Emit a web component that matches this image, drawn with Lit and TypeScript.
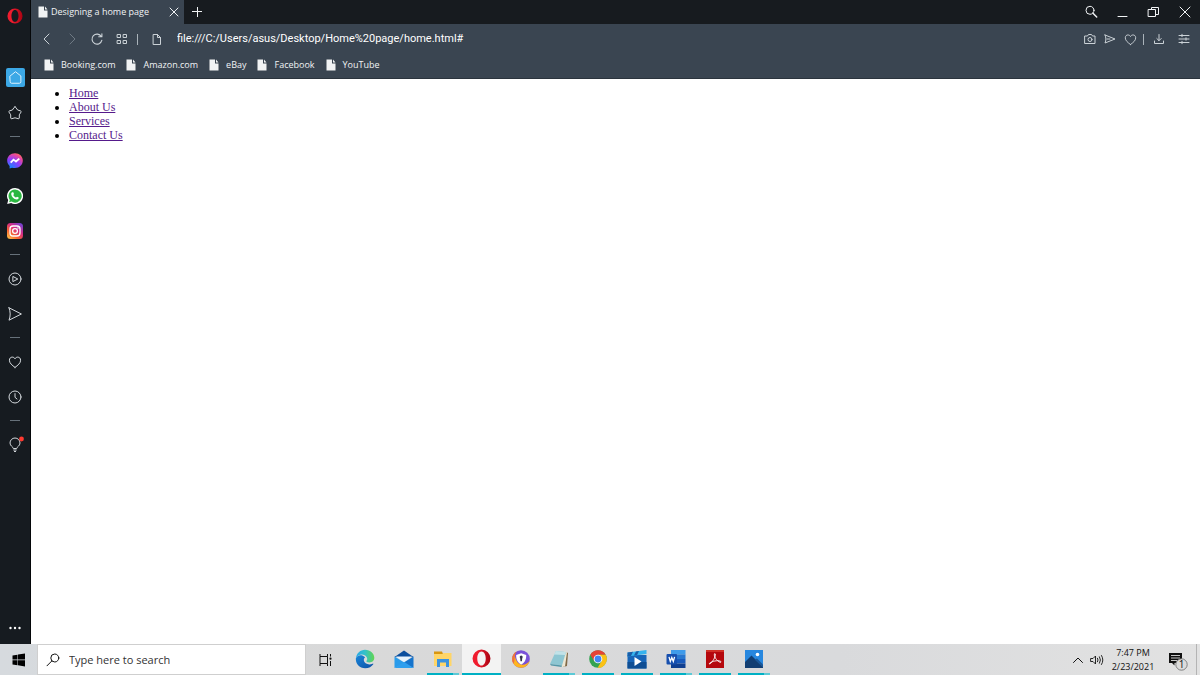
import { LitElement, html, css, svg, nothing, TemplateResult } from "lit";
import { customElement } from "lit/decorators.js";
import { classMap } from "lit/directives/class-map.js";

type Glyph = TemplateResult;

const icon = (size: number, box: string, body: Glyph) => html`<svg
  width=${size} height=${size} viewBox=${box} fill="none" stroke="currentColor"
  stroke-width="1" stroke-linejoin="round" stroke-linecap="round" aria-hidden="true">${body}</svg>`;

const line = (body: Glyph, size = 14) => icon(size, "0 0 14 14", body);

const heart = svg`<path d="M7 12.4C4 10.2 1.4 8.2 1.4 5.2C1.4 3.3 2.7 2.1 4.2 2.1C5.5 2.1 6.5 2.8 7 3.8C7.5 2.8 8.5 2.1 9.8 2.1C11.3 2.1 12.6 3.3 12.6 5.2C12.6 8.2 10 10.2 7 12.4Z"/>`;
const send = svg`<path d="M1 .8L13.4 7L1 13.2C2.6 9 2.6 5 1 .8Z"/>`;

const operaLogo = (size: number, id: string) => html`<svg width=${size} height=${size} viewBox="0 0 18 18" aria-hidden="true">
  <defs><linearGradient id=${id} x1="0" x2="1"><stop offset=".3" stop-color="#f01c2e"/><stop offset="1" stop-color="#a80312"/></linearGradient></defs>
  <path fill=${`url(#${id})`} fill-rule="evenodd" d="M9 .5A8.5 8.5 0 1 1 9 17.5A8.5 8.5 0 0 1 9 .5ZM9 2.3C6.6 2.3 5 5.4 5 9C5 12.6 6.6 15.7 9 15.7C11.4 15.7 13 12.6 13 9C13 5.4 11.4 2.3 9 2.3Z"/></svg>`;

const pageIcon = html`<svg width="10" height="12" viewBox="0 0 10 12" aria-hidden="true">
  <path fill="#f1f3f4" d="M.5 .5H6V4.5H9.5V11.5H.5Z"/><path fill="#f1f3f4" d="M7 .6L9.5 3.5H7Z"/></svg>`;

const messenger = html`<svg width="16" height="16" viewBox="0 0 16 16" aria-hidden="true">
  <defs><radialGradient id="ms" cx=".2" cy="1" r="1.1"><stop offset="0" stop-color="#0a8cff"/><stop offset=".55" stop-color="#8c3cff"/><stop offset=".85" stop-color="#e8489c"/><stop offset="1" stop-color="#ff6c60"/></radialGradient></defs>
  <path fill="url(#ms)" d="M8 .2C3.5 .2 .2 3.4 .2 7.6C.2 9.9 1.1 11.7 2.6 13V15.6L5 14.7C6 15 7 15.1 8 15.1C12.5 15.1 15.8 11.9 15.8 7.6C15.8 3.4 12.5 .2 8 .2Z"/>
  <path d="M3.7 9.6L6.5 6.6L9 8.5L12.3 5.6" fill="none" stroke="#fff" stroke-width="1.8"/></svg>`;

const whatsapp = html`<svg width="16" height="16" viewBox="0 0 16 16" aria-hidden="true">
  <path fill="#fff" d="M8 0A8 8 0 1 1 4.2 15L.2 16L1.2 12.1A8 8 0 0 1 8 0Z"/>
  <path fill="#2bb741" d="M8 1.4A6.6 6.6 0 1 1 4.6 13.6L2.1 14.2L2.8 11.9A6.6 6.6 0 0 1 8 1.4Z"/>
  <path fill="#fff" d="M5.3 4.2L6.3 4.3L7 6L6.3 6.9C6.9 8.2 7.8 9 9.1 9.6L10 8.7L11.7 9.6C11.8 10.9 10.8 11.7 9.7 11.6C6.8 11.2 4.6 9 4.2 6.3C4.1 5.4 4.6 4.5 5.3 4.2Z"/></svg>`;

const instagram = html`<svg width="16" height="16" viewBox="0 0 16 16" aria-hidden="true">
  <defs><linearGradient id="ig" x1=".1" y1="1" x2=".9" y2="0"><stop offset="0" stop-color="#ffc24a"/><stop offset=".3" stop-color="#f7652f"/><stop offset=".6" stop-color="#d62c83"/><stop offset="1" stop-color="#6a44d8"/></linearGradient></defs>
  <rect width="16" height="16" rx="3.5" fill="url(#ig)"/>
  <g fill="none" stroke="#fff" stroke-width="1.3"><rect x="3" y="3" width="10" height="10" rx="3"/><circle cx="8" cy="8" r="2.4"/></g><circle cx="11" cy="5" r=".8" fill="#fff"/></svg>`;

interface SideItem { name: string; art: Glyph; active?: boolean; }
const sideGroups: SideItem[][] = [
  [
    { name: "Speed Dial", active: true, art: line(svg`<path d="M1.2 5.4L7 .8L12.8 5.4V11.6Q12.8 13.2 11.2 13.2H2.8Q1.2 13.2 1.2 11.6Z"/>`, 13) },
    { name: "Bookmarks", art: line(svg`<path d="M7 .9Q7.5 .9 7.8 1.4L9.6 4L12.6 4.9Q13.5 5.3 13 6.1L11.3 8.8L11.3 12Q11.2 12.9 10.3 12.7L7 11.8L3.7 12.7Q2.8 12.9 2.7 12L2.7 8.8L1 6.1Q.5 5.3 1.4 4.9L4.4 4L6.2 1.4Q6.5 .9 7 .9Z"/>`) },
  ],
  [
    { name: "Messenger", art: messenger },
    { name: "WhatsApp", art: whatsapp },
    { name: "Instagram", art: instagram },
  ],
  [
    { name: "Player", art: line(svg`<circle cx="7" cy="7" r="6"/><path d="M5.2 4.6L9.8 7L5.2 9.4Z"/>`) },
    { name: "My Flow", art: line(send) },
  ],
  [
    { name: "Personal news", art: line(heart) },
    { name: "History", art: line(svg`<circle cx="7" cy="7" r="6"/><path d="M7 3.6V7.3L9 9"/>`) },
  ],
  [
    { name: "Tips", art: html`<svg width="20" height="18" viewBox="0 0 20 18" fill="none" stroke="currentColor" aria-hidden="true"><path d="M8.3 12.5C8.3 10.9 5 10 5 7A5 5 0 0 1 15 7C15 10 11.7 10.9 11.7 12.5Z"/><path d="M8.3 14H11.7M9 15.5H11"/><circle cx="16.5" cy="3" r="2.4" fill="#ff3a30" stroke="none"/></svg>` },
  ],
];

interface AppItem { name: string; art: Glyph; bar?: "one" | "many"; active?: boolean; }
const art = (body: Glyph) => html`<svg width="20" height="20" viewBox="0 0 20 20" aria-hidden="true">${body}</svg>`;

const apps: AppItem[] = [
  { name: "Microsoft Edge", art: art(svg`
    <defs><linearGradient id="e1" x1="0" x2="1"><stop offset="0" stop-color="#28a8e8"/><stop offset=".5" stop-color="#35c1c8"/><stop offset="1" stop-color="#62d64e"/></linearGradient><linearGradient id="e2" x1="0" y1="0" x2="1" y2="1"><stop offset="0" stop-color="#1a86da"/><stop offset="1" stop-color="#0c50a4"/></linearGradient></defs>
    <path fill="url(#e2)" d="M.9 9C.2 14.8 4.5 19.3 10.2 19.3C13.8 19.3 16.8 17.5 18.3 15.2C18.5 14.7 18.1 14.5 17.7 14.7C14 16.4 9.2 15 8.8 11.3C8.700 10 9.300 8.900 10.2 8.2C6.5 4.8 2.5 6 .9 9Z"/>
    <path fill="url(#e1)" d="M.9 9.3C1.5 4.3 5.3 .8 10 .8C15.5 .8 19.3 4.8 19.3 8.8C19.3 11.8 17 13.4 14.5 13.4C12.2 13.4 10.9 12.6 11.5 11.7C12.5 10.6 12.4 9.4 11.7 8.2C9.5 4.6 3.5 4.6 .9 9.3Z"/>`) },
  { name: "Mail", art: art(svg`<path fill="#0c4f9e" d="M.5 8L10 1.5L19.5 8Z"/><path fill="#e8f4fd" d="M2 7.5H18L10 13.5Z"/><path fill="#2a9bea" d="M.5 7.5L11 14L.5 19Z"/><path fill="#1674cc" d="M19.5 7.5L9 14L19.5 19Z"/><path fill="#2f9fee" d="M.5 19L10 12.8L19.5 19Z"/>`) },
  { name: "File Explorer", bar: "many", art: art(svg`<path fill="#d9960f" d="M1 2.5H9L10 5H1Z"/><path fill="#ffd567" d="M1 5H9.5L10.5 4H18.5V17H1Z"/><path fill="#3b92df" d="M4 10H16V18H13V13.5H7V18H4Z"/>`) },
  { name: "Opera", bar: "one", active: true, art: operaLogo(19, "op2") },
  { name: "Secure Browser", art: art(svg`<circle cx="10" cy="10" r="8.8" fill="#7951d9"/><path fill="#ffb51f" d="M3.5 4.1A8.8 8.8 0 1 0 18.7 11.2C17 15 12 17 8.5 15C5 13 3.8 8 3.5 4.1Z"/><path fill="#ef7140" d="M5.5 2.4C1 5 0 11 2.6 14.7C4.2 12.500 2.8 7 5.5 2.4Z"/><path fill="#fff" d="M10.2 4.2L15.2 6C15.4 10 14 13.500 10.2 15.5C6.400 13.5 5 10 5.2 6Z"/><path fill="#34354f" d="M9.1 9A1.5 1.5 0 1 1 11.3 9L10.9 12.2H9.5Z"/>`) },
  { name: "Notepad", bar: "many", art: art(svg`<path fill="#826a48" d="M17 3L19 4L18 17L14 18Z"/><path fill="#eee8d4" d="M15.5 2L18 3.5L16 17.5L12 18Z"/><path fill="#8ec6d2" d="M7 2L17 3L13 16.5L1 15Z"/><path fill="#c2e2e8" d="M7 2L17 3L16 6L5 5.5Z"/><path fill="#5397a8" d="M1 15L13 16.5L12.5 18L2 16.5Z"/>`) },
  { name: "Google Chrome", bar: "one", art: art(svg`<circle cx="10" cy="10" r="8.8" fill="#33a352"/><path fill="#e74335" d="M2.3 5.7A8.8 8.8 0 0 1 17.7 5.7H10L6.3 12.2Z"/><path fill="#fbc116" d="M17.7 5.7A8.8 8.8 0 0 1 9.6 18.8L13.6 12L10 5.7Z"/><circle cx="10" cy="10" r="4.3" fill="#fff"/><circle cx="10" cy="10" r="3.4" fill="#4285f4"/>`) },
  { name: "Movies & TV", bar: "one", art: art(svg`<path fill="#1765b8" d="M.5 6H19.5V19.5H.5Z"/><path fill="#0f4e94" d="M.5 13H19.5V19.5H.5Z"/><path fill="#36b3ee" d="M.5 3.5L19.5 1V5L.5 7.5Z"/><path fill="#1a5da8" d="M.5 3.5L6 2.8L4 7L.5 7.5ZM9 2.4L12 2L10 6.2L7 6.6Z"/><path fill="#fff" d="M7.5 8L14.5 12.5L7.5 17Z"/>`) },
  { name: "Word", bar: "many", art: art(svg`<path fill="#3f9bea" d="M5 1H19.5V5.6H5Z"/><path fill="#2877cf" d="M5 5.5H19.5V10H5Z"/><path fill="#185abd" d="M5 10H19.5V14.5H5Z"/><path fill="#103f91" d="M5 14.5H19.5V19H5Z"/><rect x=".5" y="5" width="10.5" height="10.5" rx="1" fill="#174fae"/><path d="M3 7.8L4.3 12.5L5.8 8.5L7.3 12.5L8.6 7.8" fill="none" stroke="#fff" stroke-width="1.3"/>`) },
  { name: "Acrobat Reader", bar: "one", art: art(svg`<path fill="#b5080d" d="M1 1H19V19H1Z"/><path fill="#d13026" d="M1 1H19V3H1Z"/><path d="M9.5 4.8C8.5 7 11.5 11.8 15.3 13.4C17 13.2 16 11.8 12.5 11.7C9 11.8 4.5 13.4 4.2 14.9C5.4 15.9 11 8.5 10.3 5Q10 4.2 9.5 4.8Z" fill="none" stroke="#fff" stroke-width=".9"/>`) },
  { name: "Photos", bar: "many", art: art(svg`<path fill="#2787df" d="M1 1H19V19H1Z"/><path fill="#123e72" d="M1 13L7.5 6.5L19 18V19H1Z"/><path fill="#1a5798" d="M10.5 10.5L13 9.5L19 15.5V18.5Z"/><circle cx="13.5" cy="5.5" r="1.8" fill="#fff"/>`) },
];

const reset = css`
  :host, * { box-sizing: border-box; }
  button { border: 0; padding: 0; margin: 0; background: none; color: inherit; font: inherit; display: grid; place-items: center; }
  svg { display: block; }
`;

@customElement("side-bar")
class SideBar extends LitElement {
  static styles = [reset, css`
    :host { display: flex; flex-direction: column; width: 31px; background: #161b20; border-right: 1px solid #050709; color: #d3d8dc; }
    .menu { height: 32px; }
    nav { display: flex; flex-direction: column; margin-top: 28px; flex: 1; }
    .item { height: 35px; }
    .tile { display: grid; place-items: center; }
    .active .tile { width: 19px; height: 19px; border-radius: 2px; background: #3ca8e6; color: #e8f6ff; }
    hr { width: 10px; height: 1px; border: 0; margin: 6px auto; background: #66717a; }
    .more { height: 32px; color: #fff; }
  `];
  render() {
    return html`
      <button class="menu" aria-label="Opera menu">${operaLogo(16, "op1")}</button>
      <nav>${sideGroups.map((group, i) => html`${i ? html`<hr />` : nothing}${group.map(it => html`
        <button class=${classMap({ item: true, active: !!it.active })} aria-label=${it.name}><span class="tile">${it.art}</span></button>`)}`)}
      </nav>
      <button class="more" aria-label="Sidebar setup">${line(svg`<g fill="currentColor" stroke="none"><circle cx="2.5" cy="7" r="1.2"/><circle cx="7" cy="7" r="1.2"/><circle cx="11.5" cy="7" r="1.2"/></g>`)}</button>`;
  }
}

@customElement("browser-chrome")
class BrowserChrome extends LitElement {
  static styles = [reset, css`
    :host { display: block; background: #3a4551; color: #f1f3f5; font-family: "Open Sans", "Noto Sans", sans-serif; font-size: 9px; border-bottom: 1px solid #2b343d; }
    .row { display: flex; align-items: center; }
    .tabs { height: 24px; background: #171b1f; }
    .tab { display: flex; align-items: center; width: 153px; height: 24px; padding: 0 3px 0 7px; background: #3a4551; gap: 3px; }
    .title { flex: 1; white-space: nowrap; line-height: 14px; }
    .close { width: 14px; height: 20px; }
    .add { width: 26px; height: 24px; }
    .spacer { flex: 1; }
    .win { width: 31px; height: 24px; }
    .bar { height: 30px; padding: 0 4px 0 3px; color: #cbd2d7; }
    .nav { width: 25px; height: 30px; }
    .off { color: #6f7a84; }
    .rule { width: 1px; height: 11px; margin-left: 3px; background: #aab3ba; }
    .address { display: flex; align-items: center; flex: 1; gap: 13px; margin-left: 12px; }
    .address input { flex: 1; min-width: 0; border: 0; padding: 0; outline: 0; background: none; color: #fff; font: 11px/16px Roboto, "Open Sans", sans-serif; }
    .tool { width: 20px; height: 30px; }
    .wide { width: 25px; height: 30px; }
    .rule + .wide { margin-left: 2px; }
    .marks { display: flex; gap: 11px; height: 24px; align-items: center; padding: 0 12px 2px 13px; }
    .mark { display: flex; align-items: center; gap: 7px; color: inherit; text-decoration: none; line-height: 14px; }
  `];
  render() {
    return html`
      <div class="row tabs">
        <div class="tab">${pageIcon}<span class="title">Designing a home page</span>
          <button class="close" aria-label="Close tab">${line(svg`<path d="M3 3L11 11M11 3L3 11"/>`)}</button></div>
        <button class="add" aria-label="New tab">${line(svg`<path d="M2 6.5H12M7 2V12" shape-rendering="crispEdges"/>`)}</button>
        <span class="spacer"></span>
        <button class="win" aria-label="Search tabs">${line(svg`<circle cx="5" cy="5.3" r="4"/><path d="M8 8.3L11.7 12" stroke-width="1.5"/>`)}</button>
        <button class="win" aria-label="Minimize">${line(svg`<path d="M2 11.5H11"/>`)}</button>
        <button class="win" aria-label="Restore">${line(svg`<path d="M1.5 4.5H8.5V11.5H1.5ZM4.5 4.5V2.5H11.5V9.5H8.5"/>`)}</button>
        <button class="win" aria-label="Close">${line(svg`<path d="M2 2L12 12M12 2L2 12"/>`)}</button>
      </div>
      <div class="row bar">
        <button class="nav" aria-label="Back">${line(svg`<path d="M9 2L4 7L9 12"/>`)}</button>
        <button class="nav off" aria-label="Forward">${line(svg`<path d="M5 2L10 7L5 12"/>`)}</button>
        <button class="nav" aria-label="Reload">${line(svg`<path d="M11.3 4.5A5 5 0 1 0 11.9 8.2M11.9 1.7V4.7H8.7" stroke-width="1.1"/>`)}</button>
        <button class="nav" aria-label="Tiles">${line(svg`<path d="M2.5 2.5H5.5V5.5H2.5ZM8.5 2.5H11.5V5.5H8.5ZM2.5 8.5H5.5V11.5H2.5ZM8.5 8.5H11.5V11.5H8.5Z"/>`)}</button>
        <span class="rule"></span>
        <label class="address">${line(svg`<path d="M3.5 2.5H7.5L10.5 5.5V12.5H3.5ZM7.5 2.5V5.5H10.5"/>`)}
          <input aria-label="Address" value="file:///C:/Users/asus/Desktop/Home%20page/home.html#" /></label>
        <button class="tool" aria-label="Snapshot">${line(svg`<path d="M2 4H4.5L5.5 2.5H8.5L9.5 4H12V11.5H2Z"/><circle cx="7" cy="7.5" r="2"/>`)}</button>
        <button class="tool" aria-label="Send to My Flow">${line(svg`<path d="M2 3L12 7L2 11C3.2 8.5 3.2 5.5 2 3ZM4 7H7"/>`)}</button>
        <button class="tool" aria-label="Add to bookmarks">${line(heart, 13)}</button>
        <span class="rule"></span>
        <button class="wide" aria-label="Downloads">${line(svg`<path d="M7 2.5V8.5M4.8 6.5L7 8.7L9.2 6.5M2.5 9V11.5H11.5V9"/>`)}</button>
        <button class="wide" aria-label="Easy setup">${line(svg`<path d="M2 3.5H12M2 7H12M2 10.5H12M5 2.3V4.7M9 5.8V8.2M5 9.3V11.7"/>`)}</button>
      </div>
      <nav class="marks">${["Booking.com", "Amazon.com", "eBay", "Facebook", "YouTube"].map(n => html`<a class="mark" href="#">${pageIcon}<span>${n}</span></a>`)}</nav>`;
  }
}

@customElement("task-bar")
class TaskBar extends LitElement {
  static styles = [reset, css`
    :host { display: flex; height: 31px; background: linear-gradient(90deg, #d6dade, #d9d9d9 30%, #d9dadc 70%, #e2e2e2); color: #111; font-family: "Open Sans", "Noto Sans", sans-serif; }
    .start { width: 37px; }
    .search { display: flex; align-items: center; gap: 9px; width: 269px; padding-left: 8px; background: #fff; border: 1px solid #cfcfcf; }
    .search input { flex: 1; min-width: 0; border: 0; padding: 0; outline: 0; background: none; font: 11px/16px "Open Sans", "Noto Sans", sans-serif; }
    .search input::placeholder { color: #333; opacity: 1; }
    .view { width: 40px; }
    .apps { display: grid; grid-template-columns: repeat(11, 1fr); width: 427px; }
    .app { grid-template-rows: 29px 2px; }
    .app.active { background: #f3f3f3; }
    .under { width: 32px; height: 2px; }
    .one .under { background: #00b0c4; }
    .many .under { background: linear-gradient(90deg, #00b0c4 26px, #5cc9d6 26px); }
    .active .under { width: 100%; }
    .spacer { flex: 1; }
    .tray { width: 19px; }
    .time { width: 54px; font-size: 9px; line-height: 14px; text-align: center; align-content: center; }
    .note { width: 36px; }
    .peek { width: 4px; border-left: 1px solid #b4b4b4; }
  `];
  render() {
    return html`
      <button class="start" aria-label="Start"><svg width="14" height="14" viewBox="0 0 14 14" aria-hidden="true"><path d="M.5 2.4L5.5 1.7V6.6H.5ZM6 1.6L13 .6V6.6H6ZM.5 7.2H5.5V12.2L.5 11.5ZM6 7.2H13V13.4L6 12.3Z"/></svg></button>
      <label class="search">${line(svg`<circle cx="8.8" cy="5" r="4"/><path d="M5.8 8L1 12.8"/>`)}
        <input type="text" aria-label="Search" placeholder="Type here to search" /></label>
      <button class="view" aria-label="Task View">${line(svg`<path d="M1 3.5H8.5V10.5H1ZM1 1V3.5M8.5 1V3.5M1 10.5V13M8.5 10.5V13M11.5 1V3.5M11.5 8V13" stroke-linecap="butt"/><circle cx="11.5" cy="5.7" r="1.1" fill="currentColor" stroke="none"/>`)}</button>
      <div class="apps">${apps.map(a => html`<button class=${classMap({ app: true, active: !!a.active, one: a.bar === "one", many: a.bar === "many" })} aria-label=${a.name}>${a.art}<span class="under"></span></button>`)}</div>
      <span class="spacer"></span>
      <button class="tray" aria-label="Show hidden icons">${line(svg`<path d="M2.5 9.5L7 5L11.5 9.5"/>`)}</button>
      <button class="tray" aria-label="Volume">${line(svg`<path d="M1 5.5H3L5.5 3V11L3 8.5H1ZM7.5 5.2Q8.7 7 7.5 8.8M9.5 3.8Q11.5 7 9.5 10.2M11.5 2.5Q14.3 7 11.5 11.5" stroke-width=".9"/>`)}</button>
      <div class="time">7:47 PM<br />2/23/2021</div>
      <button class="note" aria-label="1 new notification"><svg width="20" height="22" viewBox="0 0 20 22" aria-hidden="true"><path fill="#111" d="M1 4H14V14H6.5V16.5L4 14H1Z"/><path d="M3 6.5H12M3 9H12M3 11.5H9" stroke="#ddd" stroke-width=".9"/><circle cx="13.5" cy="15.5" r="5.7" fill="#dcdcdc" stroke="#777" stroke-width=".9"/><text x="13.5" y="19" font-size="10" text-anchor="middle" fill="#111">1</text></svg></button>
      <span class="peek"></span>`;
  }
}

@customElement("app-root")
class AppRoot extends LitElement {
  static styles = css`
    :host { display: flex; flex-direction: column; height: 100vh; background: #fff; }
    .window { display: flex; flex: 1; min-height: 0; }
    .view { display: flex; flex-direction: column; flex: 1; min-width: 0; }
    ul { margin: 0; padding: 7px 0 0 38px; font: 12px/14px "Liberation Serif", serif; color: #000; }
    a { color: #551a8b; }
    .page { flex: 1; }
  `;
  render() {
    return html`
      <div class="window">
        <side-bar></side-bar>
        <div class="view">
          <browser-chrome></browser-chrome>
          <main class="page"><ul>${["Home", "About Us", "Services", "Contact Us"].map(t => html`<li><a href="#">${t}</a></li>`)}</ul></main>
        </div>
      </div>
      <task-bar></task-bar>`;
  }
}
